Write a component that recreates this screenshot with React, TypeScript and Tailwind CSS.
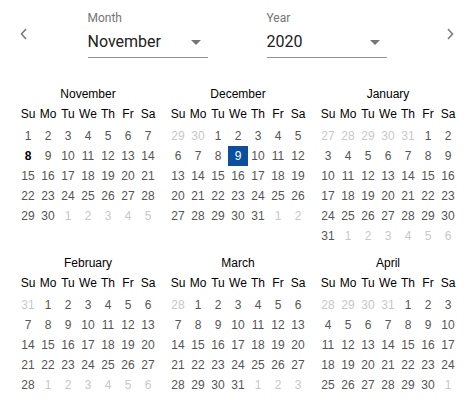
import React from 'react';

const WEEKDAYS = ['Su', 'Mo', 'Tu', 'We', 'Th', 'Fr', 'Sa'];
const MONTH_NAMES = [
  'January', 'February', 'March', 'April', 'May', 'June',
  'July', 'August', 'September', 'October', 'November', 'December',
];

type Day = { date: number; inMonth: boolean; selected: boolean; today: boolean };

const buildWeeks = (year: number, month: number): Day[][] => {
  const first = new Date(year, month, 1);
  const start = new Date(year, month, 1 - first.getDay());
  const last = new Date(year, month + 1, 0);
  const weeks: Day[][] = [];
  const cur = new Date(start);
  while (cur <= last) {
    const week: Day[] = [];
    for (let i = 0; i < 7; i++) {
      const inMonth = cur.getMonth() === month;
      week.push({
        date: cur.getDate(),
        inMonth,
        selected: inMonth && cur.getFullYear() === 2020 && cur.getMonth() === 11 && cur.getDate() === 9,
        today: inMonth && cur.getFullYear() === 2020 && cur.getMonth() === 10 && cur.getDate() === 8,
      });
      cur.setDate(cur.getDate() + 1);
    }
    weeks.push(week);
  }
  return weeks;
};

const Chevron = ({ dir }: { dir: 'left' | 'right' }) => (
  <button className="w-6 h-6 flex items-center justify-center">
    <svg width="10" height="12" viewBox="0 0 10 12" fill="none">
      <path
        d={dir === 'left' ? 'M7 1 L2.5 6 L7 11' : 'M3 1 L7.5 6 L3 11'}
        stroke="#7a7a7a"
        strokeWidth="1.6"
      />
    </svg>
  </button>
);

const Select = ({ label, value }: { label: string; value: string }) => (
  <div className="w-[120px] flex flex-col">
    <div className="h-[15px] leading-[15px] text-[12px] text-[#757575]">{label}</div>
    <div className="h-[32px] flex justify-between border-b border-[#949494]">
      <span className="pt-[6px] leading-[20px] text-[16px] text-[#212121]">{value}</span>
      <svg className="mt-[4px]" width="24" height="24" viewBox="0 0 24 24">
        <path d="M7 10l5 5 5-5z" fill="#757575" />
      </svg>
    </div>
  </div>
);

const MonthView = ({ year, month }: { year: number; month: number }) => {
  const weeks = buildWeeks(year, month);
  return (
    <div className="w-[140px]">
      <div className="h-[19px] leading-[19px] text-center text-black">{MONTH_NAMES[month]}</div>
      <div className="grid grid-cols-7 h-5 leading-5 text-center text-black">
        {WEEKDAYS.map((d) => (
          <div key={d}>{d}</div>
        ))}
      </div>
      <div className="mt-[2px]">
        {weeks.map((week, i) => (
          <div key={i} className="grid grid-cols-7 h-5 leading-5 text-center">
            {week.map((day, j) => (
              <div
                key={j}
                className={
                  day.selected
                    ? 'bg-[#0b4f9e] text-white'
                    : day.today
                      ? 'text-black font-bold'
                      : day.inMonth
                        ? 'text-[#555555]'
                        : 'text-[#c8c8c8]'
                }
              >
                {day.date}
              </div>
            ))}
          </div>
        ))}
      </div>
    </div>
  );
};

const App = () => {
  const months = Array.from({ length: 6 }, (_, i) => {
    const d = new Date(2020, 10 + i, 1);
    return { year: d.getFullYear(), month: d.getMonth() };
  });

  return (
    <div className="w-[476px] h-[400px] bg-white overflow-hidden">
      <div className="h-[85px] flex justify-between pl-3 pr-[14px] pt-[11px] font-['Roboto',sans-serif]">
        <div className="pt-[11px]">
          <Chevron dir="left" />
        </div>
        <div className="flex gap-[59px]">
          <Select label="Month" value="November" />
          <Select label="Year" value="2020" />
        </div>
        <div className="pt-[11px]">
          <Chevron dir="right" />
        </div>
      </div>
      <div className="grid grid-cols-3 gap-x-[10px] gap-y-[8px] px-[18px] text-[12px] font-['Liberation_Sans',Arial,sans-serif]">
        {months.map((m) => (
          <MonthView key={`${m.year}-${m.month}`} year={m.year} month={m.month} />
        ))}
      </div>
    </div>
  );
};

export default App;
